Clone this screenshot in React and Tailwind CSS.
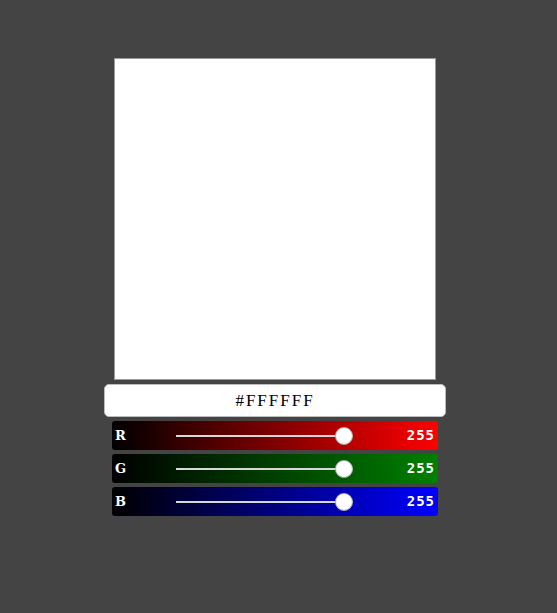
import React, { useState } from "react";

const channels = [
  { key: "r", label: "R", grad: "bg-[linear-gradient(to_right,#000000,#ff0000)]" },
  { key: "g", label: "G", grad: "bg-[linear-gradient(to_right,#000000,#008000)]" },
  { key: "b", label: "B", grad: "bg-[linear-gradient(to_right,#000000,#0000ff)]" },
];

const toHex = (n) => n.toString(16).padStart(2, "0").toUpperCase();

const ChannelBar = ({ label, grad, value }) => {
  const pct = value / 255;
  return (
    <div className={`flex items-center h-[29px] w-[326px] rounded-[3px] ${grad}`}>
      <span className="w-[64px] pl-[3px] text-[13px] font-bold text-white font-[DejaVu_Serif,serif]">
        {label}
      </span>
      <div className="relative w-[177px] h-[18px] flex items-center">
        <div className="w-full h-[2px] bg-[#d8d8d8]" />
        {/* thumb */}
        <div
          className="absolute top-0 w-[18px] h-[18px] rounded-full bg-[radial-gradient(circle_at_50%_40%,#ffffff_55%,#e2e2e2)] border border-[#b5b5b5]"
          style={{ left: `${pct * 159}px` }}
        />
      </div>
      <span className="flex-1 text-right pr-[3px] text-[14px] font-bold tracking-[1px] text-white font-[DejaVu_Sans_Mono,monospace]">
        {value}
      </span>
    </div>
  );
};

const App = () => {
  const [rgb] = useState({ r: 255, g: 255, b: 255 });
  const hex = `#${toHex(rgb.r)}${toHex(rgb.g)}${toHex(rgb.b)}`;

  return (
    <div className="min-h-[613px] w-full bg-[#444444] flex flex-col items-center pt-[58px] pr-[7px]">
      {/* preview */}
      <div className="w-[322px] h-[322px] border border-[#9a9a9a]" style={{ backgroundColor: hex }} />

      {/* hex field */}
      <div className="mt-[4px] w-[342px] h-[33px] rounded-[5px] bg-white border border-[#bdbdbd] flex items-center justify-center">
        <span className="text-[17px] tracking-[2px] text-black font-[Liberation_Serif,serif]">{hex}</span>
      </div>

      {/* channel sliders */}
      <div className="mt-[4px] flex flex-col gap-[4px]">
        {channels.map((c) => (
          <ChannelBar key={c.key} label={c.label} grad={c.grad} value={rgb[c.key]} />
        ))}
      </div>
    </div>
  );
};

export default App;
